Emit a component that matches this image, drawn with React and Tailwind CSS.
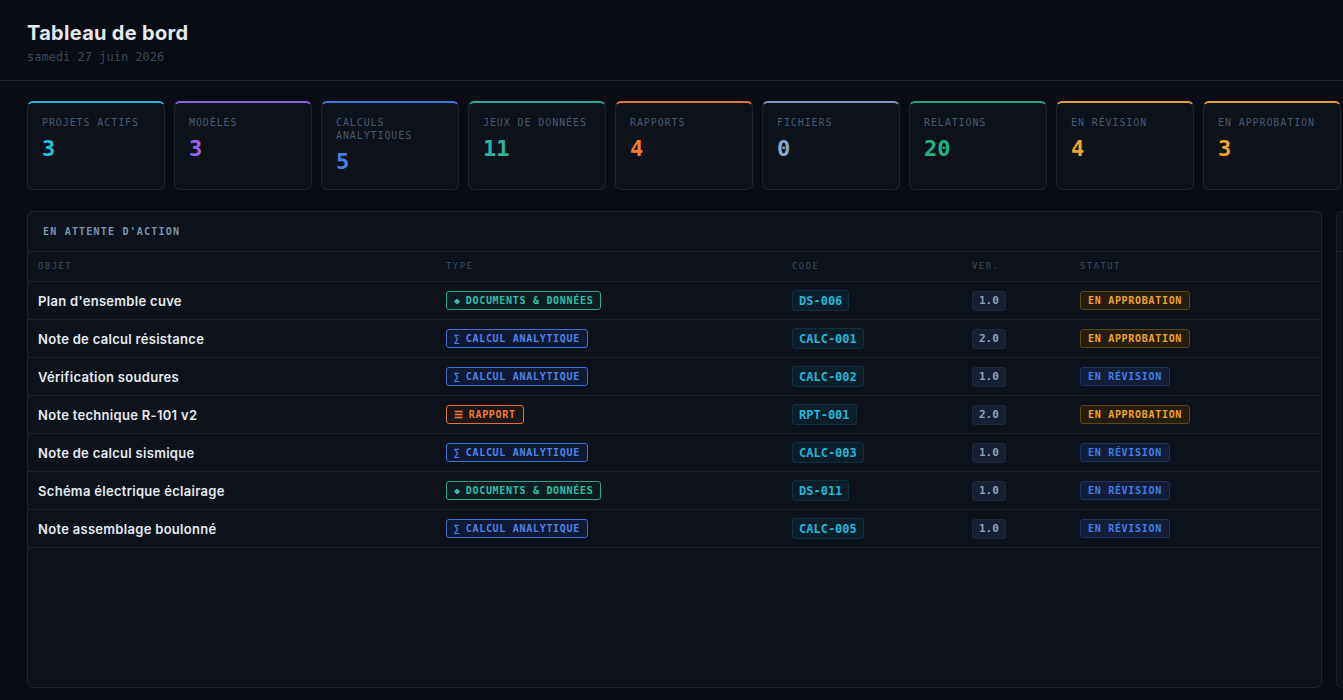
import React from "react";

const MONO = { fontFamily: '"DejaVu Sans Mono", "Liberation Mono", monospace' };
const SANS = { fontFamily: 'Inter, "Noto Sans", sans-serif' };

const stats = [
  { label: "PROJETS ACTIFS", value: "3", top: "border-t-[#1fb8d8]", text: "text-[#22c3e2]" },
  { label: "MODÈLES", value: "3", top: "border-t-[#8d5ff0]", text: "text-[#9866f2]" },
  { label: "CALCULS ANALYTIQUES", value: "5", top: "border-t-[#3d7ae2]", text: "text-[#4a82ea]" },
  { label: "JEUX DE DONNÉES", value: "11", top: "border-t-[#2aa898]", text: "text-[#2cb59c]" },
  { label: "RAPPORTS", value: "4", top: "border-t-[#ea7532]", text: "text-[#f07b32]" },
  { label: "FICHIERS", value: "0", top: "border-t-[#7d98b8]", text: "text-[#8ca8c8]" },
  { label: "RELATIONS", value: "20", top: "border-t-[#22a77c]", text: "text-[#22b380]" },
  { label: "EN RÉVISION", value: "4", top: "border-t-[#e8a23a]", text: "text-[#f2a62a]" },
  { label: "EN APPROBATION", value: "3", top: "border-t-[#e8a23a]", text: "text-[#f2a62a]" },
];

const TYPES = {
  doc: {
    icon: "◆",
    label: "DOCUMENTS & DONNÉES",
    cls: "border-[#2aa392] text-[#2fbfa8] bg-[#0d1d22]",
    iconCls: "text-[10px]",
  },
  calc: {
    icon: "∑",
    label: "CALCUL ANALYTIQUE",
    cls: "border-[#3a6fd6] text-[#4d83ea] bg-[#101a33]",
    iconCls: "text-[10px]",
  },
  rpt: {
    icon: "☰",
    label: "RAPPORT",
    cls: "border-[#e0713a] text-[#f07c3c] bg-[#1d1615]",
    iconCls: "text-[10px]",
  },
};

const STATUS = {
  app: { label: "EN APPROBATION", cls: "bg-[#251d10] border-[#5c4519] text-[#f0a32c]" },
  rev: { label: "EN RÉVISION", cls: "bg-[#121d38] border-[#1f3360] text-[#3f7ee8]" },
};

const rows = [
  { name: "Plan d'ensemble cuve", type: "doc", code: "DS-006", ver: "1.0", status: "app" },
  { name: "Note de calcul résistance", type: "calc", code: "CALC-001", ver: "2.0", status: "app" },
  { name: "Vérification soudures", type: "calc", code: "CALC-002", ver: "1.0", status: "rev" },
  { name: "Note technique R-101 v2", type: "rpt", code: "RPT-001", ver: "2.0", status: "app" },
  { name: "Note de calcul sismique", type: "calc", code: "CALC-003", ver: "1.0", status: "rev" },
  { name: "Schéma électrique éclairage", type: "doc", code: "DS-011", ver: "1.0", status: "rev" },
  { name: "Note assemblage boulonné", type: "calc", code: "CALC-005", ver: "1.0", status: "rev" },
];

function StatCard({ s }) {
  return (
    <div
      className={`w-[138px] shrink-0 h-[89px] rounded-[6px] border border-[#1c2536] border-t-2 ${s.top} bg-[#0d121b] px-[14px] pt-[13px]`}
    >
      <div style={MONO} className="text-[10px] leading-[13px] tracking-[0.9px] text-[#4a5a6f]">
        {s.label}
      </div>
      <div style={MONO} className={`mt-[7px] text-[22px] leading-[26px] font-bold ${s.text}`}>
        {s.value}
      </div>
    </div>
  );
}

function Row({ r }) {
  const t = TYPES[r.type];
  const st = STATUS[r.status];
  return (
    <div className="grid grid-cols-[408px_346px_180px_108px_1fr] items-center h-[38px] border-b border-[#1a2332] pl-[10px]">
      <div style={SANS} className="text-[13px] leading-[16px] font-semibold text-[#e6ebf2] tracking-[0.3px]">
        {r.name}
      </div>
      <div className="flex items-center">
        <span
          style={MONO}
          className={`inline-flex items-center gap-[5px] h-[19px] rounded-[3px] border px-[7px] text-[10px] font-bold tracking-[0.7px] leading-none ${t.cls}`}
        >
          <span className={t.iconCls}>{t.icon}</span>
          <span>{t.label}</span>
        </span>
      </div>
      <div className="flex items-center">
        <span
          style={MONO}
          className="inline-flex items-center h-[21px] rounded-[3px] border border-[#123041] bg-[#0b1e2a] px-[6px] text-[12px] font-bold text-[#22b6d8] leading-none"
        >
          {r.code}
        </span>
      </div>
      <div className="flex items-center">
        <span
          style={MONO}
          className="inline-flex items-center h-[20px] rounded-[3px] border border-[#1f2a3d] bg-[#162032] px-[6px] text-[11px] font-bold text-[#8fa0b6] leading-none"
        >
          {r.ver}
        </span>
      </div>
      <div className="flex items-center">
        <span
          style={MONO}
          className={`inline-flex items-center h-[19px] rounded-[3px] border px-[7px] text-[10px] font-bold tracking-[0.7px] leading-none ${st.cls}`}
        >
          {st.label}
        </span>
      </div>
    </div>
  );
}

export default function App() {
  return (
    <div className="w-full h-[700px] overflow-hidden bg-[#090c13]">
      <header className="px-[27px] pt-[21px] pb-[15px] border-b border-[#1c2434]">
        <h1 style={SANS} className="text-[20px] leading-[24px] font-bold text-[#e5e9f0] tracking-[0.3px]">
          Tableau de bord
        </h1>
        <div style={MONO} className="mt-[4px] text-[12px] leading-[16px] text-[#39495d]">
          samedi 27 juin 2026
        </div>
      </header>

      <div className="pl-[27px] pt-[20px]">
        <div className="flex gap-[9px]">
          {stats.map((s) => (
            <StatCard key={s.label} s={s} />
          ))}
        </div>

        <div className="mt-[21px] flex gap-[14px]">
          <section className="w-[1295px] shrink-0 h-[477px] rounded-[6px] border border-[#1c2536] bg-[#0d121b] overflow-hidden">
            <div className="h-[40px] flex items-center px-[15px] border-b border-[#1c2536]">
              <span style={MONO} className="text-[10px] font-bold tracking-[1.2px] text-[#7c93b1]">
                EN ATTENTE D'ACTION
              </span>
            </div>
            <div
              style={MONO}
              className="grid grid-cols-[408px_346px_180px_108px_1fr] items-center h-[30px] border-b border-[#1a2332] pl-[10px] text-[9px] tracking-[1.4px] text-[#3e4e63]"
            >
              <div>OBJET</div>
              <div>TYPE</div>
              <div>CODE</div>
              <div>VER.</div>
              <div>STATUT</div>
            </div>
            {rows.map((r) => (
              <Row key={r.code} r={r} />
            ))}
          </section>
          <section className="w-[400px] shrink-0 h-[477px] rounded-[6px] border border-[#1c2536] bg-[#0d121b]">
            <div className="h-[40px] border-b border-[#1c2536]" />
          </section>
        </div>
      </div>
    </div>
  );
}
